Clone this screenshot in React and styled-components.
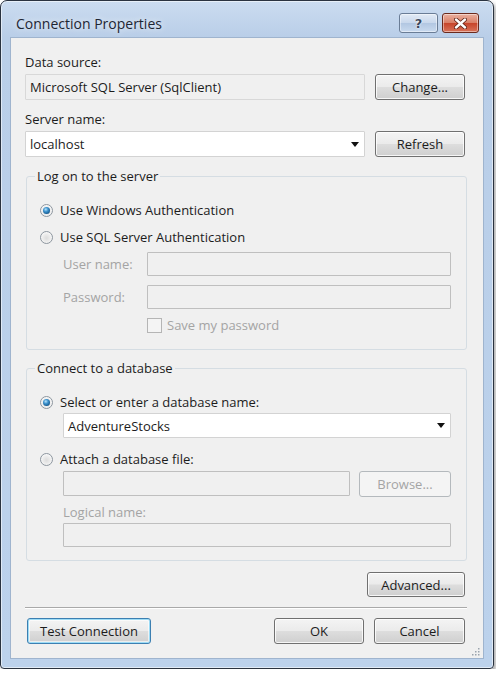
import React from 'react'
import styled, { createGlobalStyle, css } from 'styled-components'

const GlobalStyle = createGlobalStyle`
  * { box-sizing: border-box; }
  html, body { margin: 0; background: #fff; }
  body {
    font-family: "Open Sans", "Noto Sans", sans-serif;
    font-size: 13px;
    color: #1c1c1c;
  }
`

const Window = styled.div`
  width: 494px;
  border: 1px solid #2a3340;
  border-radius: 7px 7px 4px 4px;
  background: linear-gradient(180deg, #cbdcf0 0px, #b9cee8 36px, #bcd2ec 100%);
  box-shadow: 2px 3px 4px rgba(0, 0, 0, 0.35), inset 0 0 0 1px rgba(255, 255, 255, 0.55);
  padding: 0 9px 9px;
  display: flex;
  flex-direction: column;
`

const TitleBar = styled.div`
  height: 36px;
  padding: 8px 5px 0 6px;
  display: flex;
  align-items: center;
  justify-content: space-between;
`

const Caption = styled.div`
  font-size: 14px;
  color: #1e2633;
  text-shadow: 0 0 6px rgba(255, 255, 255, 0.9);
`

const CaptionButtons = styled.div`
  display: flex;
  gap: 4px;
`

const CaptionButton = styled.div`
  height: 20px;
  width: ${p => p.$w}px;
  border-radius: 3px;
  display: flex;
  align-items: center;
  justify-content: center;
  box-shadow: inset 0 0 0 1px rgba(255, 255, 255, 0.45);
  ${p => p.$close ? css`
    border: 1px solid #6b2a1d;
    background: linear-gradient(180deg, #eab0a0 0%, #d98068 48%, #c7452b 52%, #d8735a 100%);
  ` : css`
    border: 1px solid #6a7d96;
    background: linear-gradient(180deg, #e2ebf6 0%, #c9d8ec 48%, #b2c7e2 52%, #c9daef 100%);
  `}
`

const HelpGlyph = styled.span`
  font-family: "DejaVu Sans", sans-serif;
  font-weight: bold;
  font-size: 13px;
  line-height: 1;
  color: #3a475c;
  text-shadow: 0 0 2px #fff, 0 0 1px #fff;
`

const Client = styled.div`
  position: relative;
  background: #f0f0f0;
  border: 1px solid #9fb4ce;
  padding: 16px 16px 14px 14px;
  display: flex;
  flex-direction: column;
`

const Label = styled.div`
  line-height: 16px;
  margin-top: ${p => p.$mt || 0}px;
  margin-left: ${p => p.$ml || 0}px;
  color: ${p => (p.$disabled ? '#a4a4a4' : '#1c1c1c')};
`

const Row = styled.div`
  display: flex;
  align-items: ${p => p.$align || 'center'};
  justify-content: ${p => p.$justify || 'flex-start'};
  gap: ${p => p.$gap ?? 10}px;
  margin-top: ${p => p.$mt || 0}px;
  margin-left: ${p => p.$ml || 0}px;
`

const fieldKinds = {
  readonly: css`
    background: #f0f0f0;
    border-color: #d8d8d8;
    color: #1c1c1c;
  `,
  white: css`
    background: #fff;
    border-color: #d3d3d3;
    color: #1c1c1c;
  `,
  disabled: css`
    background: #f0f0f0;
    border-color: #bfbfbf;
  `,
}

const Field = styled.div`
  flex: 1;
  height: ${p => p.$h || 25}px;
  border: 1px solid;
  border-radius: 1px;
  padding: 0 5px 0 4px;
  display: flex;
  align-items: center;
  justify-content: space-between;
  ${p => fieldKinds[p.$kind || 'white']}
`

const Arrow = styled.svg`
  width: 8px;
  height: 5px;
  flex: none;
`

const Button = styled.button`
  width: ${p => p.$w}px;
  height: ${p => p.$h || 26}px;
  margin: ${p => p.$m || '0'};
  padding: 0;
  font: inherit;
  color: #1c1c1c;
  border: 1px solid #707070;
  border-radius: 3px;
  background: linear-gradient(180deg, #f4f4f4 0%, #ebebeb 48%, #dddddd 52%, #cfcfcf 100%);
  box-shadow: inset 0 0 0 1px rgba(255, 255, 255, 0.8);
  flex: none;
  ${p => p.$default && css`
    border-color: #3c7fb1;
    box-shadow: inset 0 0 0 1px #9ddcf6, inset 0 0 0 2px rgba(255, 255, 255, 0.6);
  `}
  ${p => p.$disabled && css`
    color: #a4a4a4;
    border-color: #b4b9bd;
    background: #f4f4f4;
    box-shadow: none;
  `}
`

const Group = styled.fieldset`
  margin: ${p => p.$mt}px 0 0 1px;
  padding: 0 15px ${p => p.$pb}px 13px;
  border: 1px solid #d5dde3;
  border-radius: 3px;
  min-width: 0;
`

const Legend = styled.legend`
  padding: 0 2px;
  margin-left: -5px;
  line-height: 16px;
`

const Option = styled.div`
  display: flex;
  align-items: center;
  gap: 7px;
  height: 18px;
  margin-top: ${p => p.$mt || 0}px;
`

const RadioDot = styled.span`
  position: relative;
  width: 13px;
  height: 13px;
  border-radius: 50%;
  border: 1px solid #8d969f;
  background: radial-gradient(circle at 50% 55%, #dcdcdc 0, #ececec 45%, #fbfbfb 80%);
  flex: none;
  ${p => p.$checked && css`
    &::after {
      content: '';
      position: absolute;
      left: 2px;
      top: 2px;
      width: 7px;
      height: 7px;
      border-radius: 50%;
      background: radial-gradient(circle at 40% 35%, #b8e4fb 0, #3f94cf 35%, #155a8f 75%, #0e3d66 100%);
    }
  `}
`

const AuthGrid = styled.div`
  display: grid;
  grid-template-columns: 84px 1fr;
  align-items: center;
  margin-left: 23px;
  margin-top: ${p => p.$mt || 0}px;
`

const CheckLine = styled.div`
  display: flex;
  align-items: center;
  gap: 5px;
  color: #a4a4a4;
  line-height: 16px;
`

const CheckBox = styled.span`
  width: 15px;
  height: 15px;
  border: 1px solid #b5b5b5;
  background: #f4f4f4;
  flex: none;
`

const Separator = styled.div`
  margin-top: 10px;
  border-top: 1px solid #a9a9a9;
  border-bottom: 1px solid #ffffff;
`

const Grip = styled.svg`
  position: absolute;
  right: 3px;
  bottom: 2px;
  width: 10px;
  height: 10px;
`

const DropArrow = () => (
  <Arrow viewBox="0 0 8 5">
    <path d="M0 0 H8 L4 5 Z" fill="#111" />
  </Arrow>
)

const Radio = ({ checked, mt, children }) => (
  <Option $mt={mt}>
    <RadioDot $checked={checked} />
    <span>{children}</span>
  </Option>
)

export default function App() {
  return (
    <>
      <GlobalStyle />
      <Window>
        <TitleBar>
          <Caption>Connection Properties</Caption>
          <CaptionButtons>
            <CaptionButton $w={39}>
              <HelpGlyph>?</HelpGlyph>
            </CaptionButton>
            <CaptionButton $w={37} $close>
              <svg width="13" height="11" viewBox="0 0 13 11">
                <path d="M2 1.5 L11 9.5 M11 1.5 L2 9.5" stroke="#5b1e12" strokeWidth="4" strokeLinecap="round" />
                <path d="M2 1.5 L11 9.5 M11 1.5 L2 9.5" stroke="#fff" strokeWidth="2.4" strokeLinecap="round" />
              </svg>
            </CaptionButton>
          </CaptionButtons>
        </TitleBar>

        <Client>
          <Label>Data source:</Label>
          <Row $mt={4}>
            <Field $kind="readonly" $h={26}>Microsoft SQL Server (SqlClient)</Field>
            <Button $w={90} $m="0 2px 0 0">Change...</Button>
          </Row>

          <Label $mt={11}>Server name:</Label>
          <Row $mt={4}>
            <Field $kind="white" $h={26}>
              <span>localhost</span>
              <DropArrow />
            </Field>
            <Button $w={90} $m="0 2px 0 0">Refresh</Button>
          </Row>

          <Group $mt={11} $pb={16}>
            <Legend>Log on to the server</Legend>
            <Radio checked mt={17}>Use Windows Authentication</Radio>
            <Radio mt={9}>Use SQL Server Authentication</Radio>
            <AuthGrid $mt={6}>
              <Label $disabled>User name:</Label>
              <Field $kind="disabled" $h={24} />
            </AuthGrid>
            <AuthGrid $mt={9}>
              <Label $disabled>Password:</Label>
              <Field $kind="disabled" $h={24} />
            </AuthGrid>
            <AuthGrid $mt={8}>
              <span />
              <CheckLine>
                <CheckBox />
                <span>Save my password</span>
              </CheckLine>
            </AuthGrid>
          </Group>

          <Group $mt={10} $pb={13}>
            <Legend>Connect to a database</Legend>
            <Radio checked mt={17}>Select or enter a database name:</Radio>
            <Row $mt={2} $ml={23}>
              <Field $kind="white" $h={25}>
                <span>AdventureStocks</span>
                <DropArrow />
              </Field>
            </Row>
            <Radio mt={12}>Attach a database file:</Radio>
            <Row $mt={3} $ml={23} $gap={9} $align="flex-start">
              <Field $kind="disabled" $h={25} />
              <Button $w={92} $disabled>Browse...</Button>
            </Row>
            <Label $mt={7} $ml={23} $disabled>Logical name:</Label>
            <Row $mt={3} $ml={23}>
              <Field $kind="disabled" $h={24} />
            </Row>
          </Group>

          <Row $mt={11} $justify="flex-end">
            <Button $w={98} $h={25} $m="0 2px 0 0">Advanced...</Button>
          </Row>

          <Separator />

          <Row $mt={9} $gap={0}>
            <Button $w={124} $m="0 0 0 2px" $default>Test Connection</Button>
            <Row $gap={10} style={{ marginLeft: 'auto' }}>
              <Button $w={90}>OK</Button>
              <Button $w={91} $m="0 2px 0 0">Cancel</Button>
            </Row>
          </Row>

          <Grip viewBox="0 0 10 10">
            {[[8, 2], [8, 5], [5, 5], [8, 8], [5, 8], [2, 8]].map(([x, y]) => (
              <rect key={`${x}-${y}`} x={x} y={y} width="1.5" height="1.5" fill="#9aa3ad" />
            ))}
          </Grip>
        </Client>
      </Window>
    </>
  )
}
